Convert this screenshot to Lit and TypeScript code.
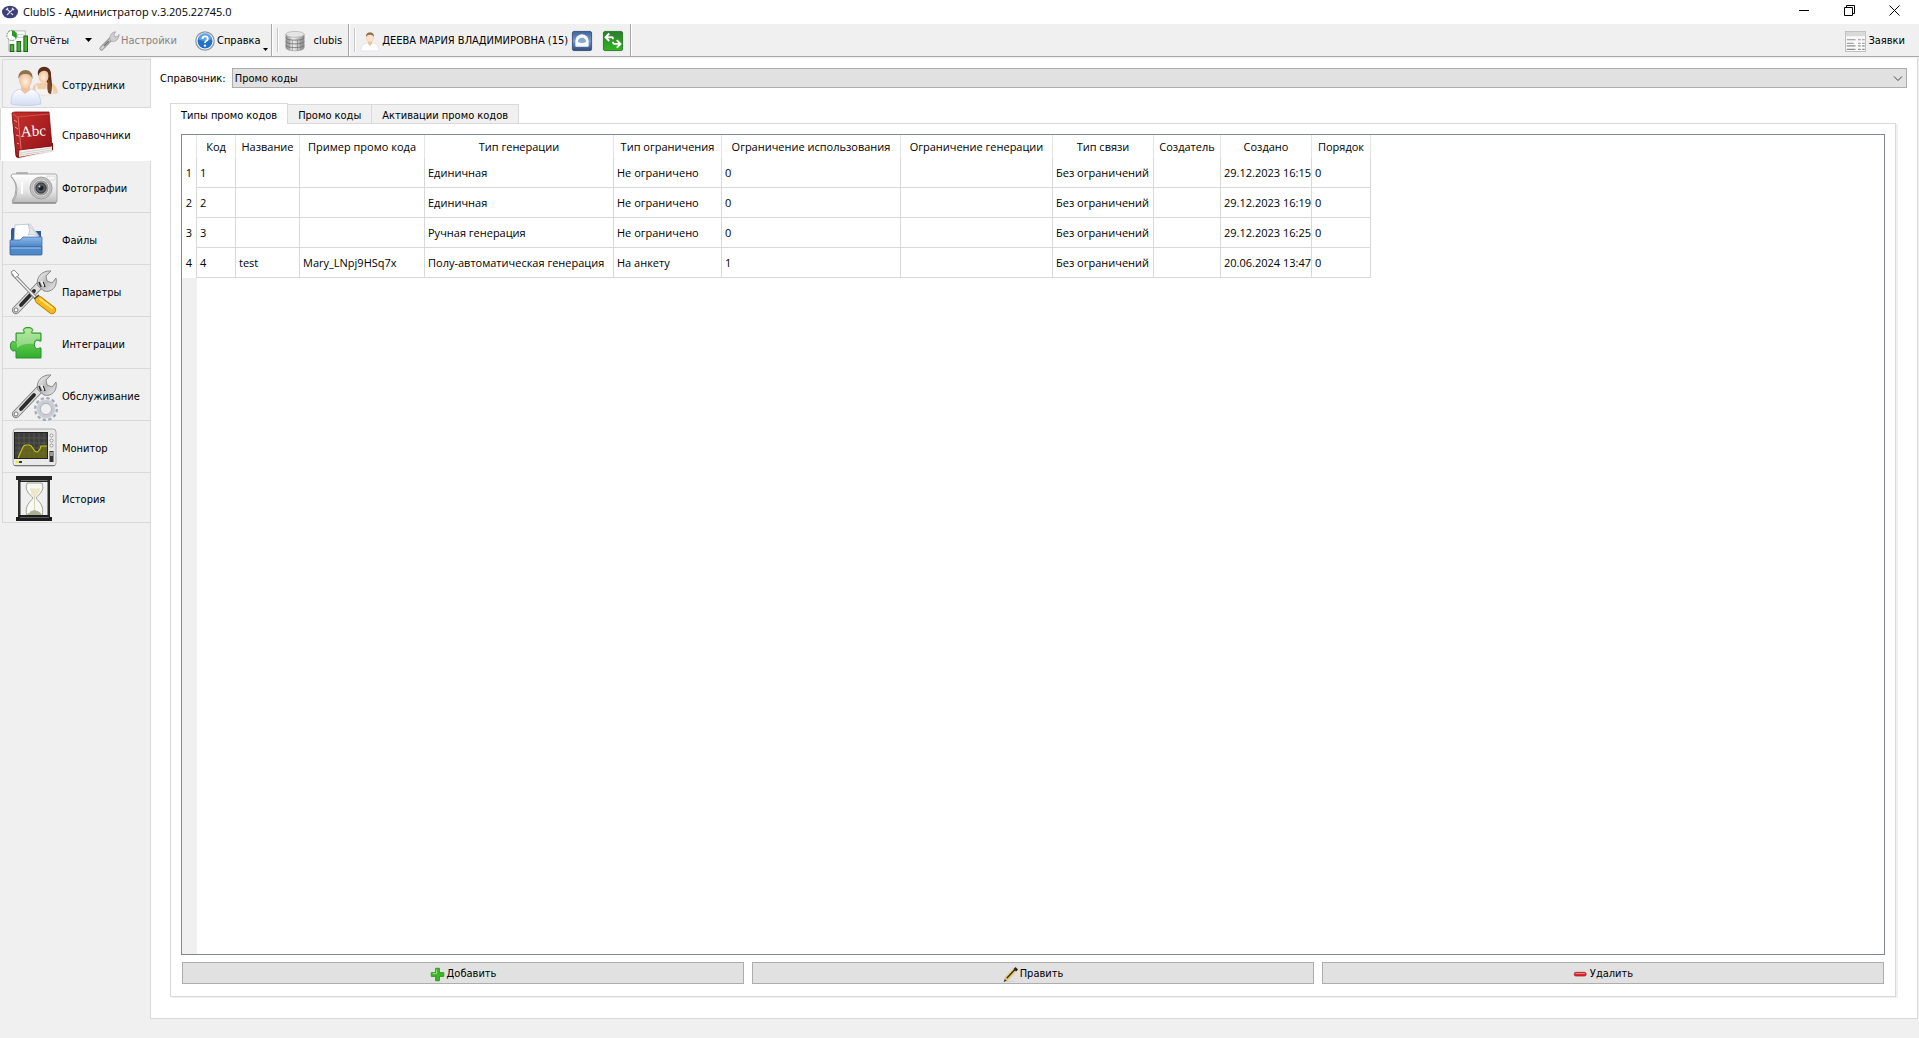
/**
 * ClubIS administrator window
 */
import { LitElement, html, svg, css, nothing } from 'lit'
import type { TemplateResult } from 'lit'
import { customElement, property, state } from 'lit/decorators.js'
import { classMap } from 'lit/directives/class-map.js'

const WRENCH = svg`
  <path d="M6 41 30 16" stroke="#7b7b7b" stroke-width="8" stroke-linecap="round"/>
  <path d="M6 41 30 16" stroke="#dedede" stroke-width="6.2" stroke-linecap="round"/>
  <path d="M11 36 24 22" stroke="#2c2c2c" stroke-width="3.8" stroke-linecap="round"/>
  <path d="M28 17C25 9 32 1 41 2L36 7 37 12 42 14 46 9C48 18 41 24 34 22Z" fill="url(#steel)" stroke="#8a8a8a"/>
  <path d="M29 13 31 18M33 13 35 18" stroke="#333" stroke-width="1.6"/>
  <path d="M31.500 12 33.500 17" stroke="#fff" stroke-width="1.2"/>
  <circle cx="6" cy="41" r="2" fill="#fff" stroke="#777"/>
`

const STEEL = svg`
  <linearGradient id="steel" x1="0" y1="0" x2="1" y2="1">
    <stop offset="0" stop-color="#fafafa"/><stop offset=".5" stop-color="#b9b9b9"/><stop offset="1" stop-color="#ededed"/>
  </linearGradient>
`

const ICONS: Record<string, TemplateResult> = {
  staff: svg`
    <defs>
      <radialGradient id="skin" cx=".5" cy=".6"><stop offset="0" stop-color="#ffeedd"/><stop offset="1" stop-color="#eec29b"/></radialGradient>
      <linearGradient id="shirt" x1="0" y1="0" x2="0" y2="1"><stop offset="0" stop-color="#fff"/><stop offset="1" stop-color="#d3dcf4"/></linearGradient>
    </defs>
    <g transform="translate(0 3)">
      <path d="M22 28C22 20 25 18 31 18L38 17C44 18 47 21 48 28 40 30 31 30 22 28Z" fill="#f3cda8"/>
      <path d="M26 18 28 24H36L38 17 41 18 44 28C38 31 30 31 25 28Z" fill="#f7f4ee" stroke="#ddd6c8" stroke-width=".5"/>
      <path d="M28 10C26-1 42-1 41 10L42 20 41 28C38 30 37 26 38 18Z" fill="#5a2f1c"/>
      <ellipse cx="33.5" cy="11" rx="5" ry="7" fill="url(#skin)"/>
      <path d="M28 10C28 0 39 0 39.500 9 36 4 31 5 28 10Z" fill="#5a2f1c"/>
      <path d="M38 14C42 17 42 25 41 29 37 29 37 20 38 14Z" fill="#7b472b"/>
    </g>
    <path d="M1 42C1 33 3 29 10 27L15 31 21 27C28 29 30 33 31 42 23 44 9 44 1 42Z" fill="url(#shirt)" stroke="#bfc9e2" stroke-width=".7"/>
    <path d="M11 23H20V28L15 32 11 28Z" fill="#edc39d"/>
    <ellipse cx="15.5" cy="18" rx="6.5" ry="8.5" fill="url(#skin)"/>
    <path d="M8.500 17C7 5 24 5 22.500 17 21 13 19 12 15 12 12 12 10 13 8.500 17Z" fill="#8f7152"/>
  `,
  book: svg`
    <defs>
      <linearGradient id="cover" x1="0" y1="0" x2="1" y2="1"><stop offset="0" stop-color="#c9302c"/><stop offset="1" stop-color="#8f1218"/></linearGradient>
    </defs>
    <path d="M8 45 43 38" stroke="#b8b8b8" stroke-width="3" opacity=".5"/>
    <path d="M2 3 8 45 9 39 43 31 43 38 8 46 6 45 2 3Z" fill="#7e1015"/>
    <path d="M9 38 42 34 42 39 9 45Z" fill="#f5f2ee"/>
    <path d="M9 41 42 36M9 43 42 38" stroke="#c7c0ba" stroke-width=".7"/>
    <path d="M2 1C3 0 5 0 7 0L39 0 42 34 9 38 8 45 6 44Z" fill="url(#cover)" stroke="#7c1015" stroke-width=".8"/>
    <path d="M8 5 11 37" stroke="#e0706a" stroke-width="1"/>
    <path d="M3 2 7 5 39 2" stroke="#e0706a" stroke-width=".6" fill="none"/>
    <path d="M4 8 7 10M5 15 8 17M6 23 9 24M7 31 9 32" stroke="#e8a09a" stroke-width="1"/>
    <text class="abc" x="11" y="24" transform="rotate(-3 24 22)">Abc</text>
  `,
  camera: svg`
    <defs>
      <linearGradient id="body" x1="0" y1="0" x2="0" y2="1"><stop offset="0" stop-color="#fff"/><stop offset=".6" stop-color="#e4e4e4"/><stop offset="1" stop-color="#b9b9b9"/></linearGradient>
      <radialGradient id="ring"><stop offset=".4" stop-color="#7d7d7d"/><stop offset="1" stop-color="#d0d0d0"/></radialGradient>
    </defs>
    <rect x="6" y="7" width="12" height="4" rx="1" fill="#b5b5b5"/>
    <path d="M3 9H45Q47 9 47 11V36Q47 38 44 38H5Q3 38 2 36 6 30 6 24 6 16 1 12 1 9 3 9Z" fill="url(#body)" stroke="#a5a5a5"/>
    <path d="M2 12Q7 18 7 24 7 32 3 37" fill="none" stroke="#aaa"/>
    <path d="M2 38H46" stroke="#777"/>
    <path d="M12 17V29" stroke="#fff" stroke-width="2"/>
    <rect x="37" y="11" width="8" height="4" fill="#f7f7f7" stroke="#c9c9c9" stroke-width=".6"/>
    <circle cx="31" cy="23" r="11" fill="url(#ring)" stroke="#8a8a8a" stroke-width=".7"/>
    <circle cx="31" cy="23" r="8" fill="#999" stroke="#ddd"/>
    <circle cx="31" cy="23" r="5" fill="#5a5f66" stroke="#333"/>
    <circle cx="31" cy="23" r="2.5" fill="#1b1e24"/>
    <circle cx="29.5" cy="21.5" r="1" fill="#cfd8e8"/>
  `,
  folder: svg`
    <defs>
      <linearGradient id="blue" x1="0" y1="0" x2="0" y2="1"><stop offset="0" stop-color="#8db9ea"/><stop offset="1" stop-color="#4a83c4"/></linearGradient>
    </defs>
    <path d="M1 13 2 11H10L12 14H31V30H1Z" fill="#2d5b95"/>
    <path d="M5 8 20 7 29 19V26H4Z" fill="#fff" stroke="#b8c0cc" stroke-width=".8"/>
    <path d="M18 7C20 12 20 15 18 18 22 17 26 18 29 20Z" fill="#e3e7ee" stroke="#b3bac6" stroke-width=".7"/>
    <path d="M0 23H10L13 20H32V30H0Z" fill="url(#blue)" stroke="#3d72b2" stroke-width=".8"/>
    <path d="M0 30H32V37Q32 38 31 38H1Q0 38 0 37Z" fill="#5089c9" stroke="#2f619e" stroke-width=".8"/>
    <path d="M1 31H31" stroke="#a8cbf2"/>
  `,
  tools: svg`
    <defs>${STEEL}</defs>
    ${WRENCH}
    <path d="M3 5 28 31" stroke="#8a8a8a" stroke-width="3.5" stroke-linecap="round"/>
    <path d="M3 5 28 31" stroke="#f2f2f2" stroke-width="1.5" stroke-linecap="round"/>
    <path d="M1 3 4 1 9 6 5 9Z" fill="#fff" stroke="#8a8a8a"/>
    <path d="M29 31 42 41" stroke="#b97c00" stroke-width="8" stroke-linecap="round"/>
    <path d="M29 31 42 41" stroke="#f7b918" stroke-width="6.5" stroke-linecap="round"/>
    <path d="M30 30 42 39" stroke="#ffe37c" stroke-width="2" stroke-linecap="round"/>
    <path d="M24 30 29 26" stroke="#444" stroke-width="1.5"/>
  `,
  puzzle: svg`
    <defs>
      <linearGradient id="green" x1="0" y1="0" x2="0" y2="1"><stop offset="0" stop-color="#8fe06d"/><stop offset="1" stop-color="#2fae2c"/></linearGradient>
    </defs>
    <path d="M6 12H14C15 11 12 9 14 7.500 16 6 20 6 22 7.500 24 9 21 11 22 12H31V20C30 21 27 18 25.500 20 24 22 24 25 25.500 27 27 29 30 26 31 27V37H6V30C5 29 3 31 1.500 29 0 27 0 23 1.500 21 3 19 5 22 6 21Z" fill="url(#green)" stroke="#2c8f33"/>
    <path d="M7 13H15C16 11 13 9 16 8H20C23 9 20 11 21 13H30V18C26 17 23 20 24 23 18 22 11 23 7 27V22L5 21C6 20 7 21 7 20Z" fill="#fff" opacity=".35"/>
  `,
  service: svg`
    <defs>${STEEL}</defs>
    ${WRENCH}
    <circle cx="36" cy="36" r="10" fill="none" stroke="#a4a9b4" stroke-width="4" stroke-dasharray="3 2.235"/>
    <circle cx="36" cy="36" r="7.5" fill="none" stroke="#c9ccd4" stroke-width="4"/>
    <circle cx="36" cy="36" r="5.5" fill="#efefef" stroke="#9b9fa9" stroke-width=".7"/>
    <circle cx="36" cy="36" r="9.5" fill="none" stroke="#e6e8ec" stroke-width=".8"/>
  `,
  monitor: svg`
    <rect x="3" y="4" width="43" height="37" rx="3" fill="#e9e9e9" stroke="#a8a8a8"/>
    <path d="M4 40.500H45" stroke="#777"/>
    <rect x="4.5" y="7.5" width="33" height="26" fill="#3d3d3b" stroke="#222"/>
    <path d="M9 8V33M14 8V33M19 8V33M24 8V33M29 8V33M34 8V33M5 13H37M5 18H37M5 23H37M5 28H37" stroke="#5e5e5a" stroke-width=".7"/>
    <path d="M8 33 13 22Q14 20 16 20H19Q21 20 22 22L24 25Q25 27 27 27 28 27 30 24L31 21H37V33H8Z" fill="#77760f" opacity=".65"/>
    <path d="M8 33 13 22Q14 20 16 20H19Q21 20 22 22L24 25Q25 27 27 27 28 27 30 24L31 21H37" fill="none" stroke="#c3c21c" stroke-width="1.2"/>
    <circle cx="41.5" cy="10.5" r="1.5" fill="#fff" stroke="#777" stroke-width=".7"/>
    <circle cx="41.5" cy="15.5" r="1.5" fill="#fff" stroke="#777" stroke-width=".7"/>
    <circle cx="41.5" cy="20.5" r="1.5" fill="#fff" stroke="#777" stroke-width=".7"/>
    <rect x="39.5" y="26" width="4" height="11" fill="#333"/>
    <rect x="40" y="27" width="3" height="4" fill="#999"/>
    <rect x="6" y="36" width="3" height="2" fill="#e6ee22"/>
    <rect x="9" y="36" width="3" height="2" fill="#333"/>
  `,
  hourglass: svg`
    <path d="M6 0H42V4H40L38 6H10L8 4H6Z" fill="#222"/>
    <path d="M11 4.500H38" stroke="#777"/>
    <rect x="8" y="4" width="2.5" height="37" fill="#2b2b2b"/>
    <rect x="37.5" y="4" width="2.5" height="37" fill="#2b2b2b"/>
    <path d="M17 7C14 15 20 18 23 22 20 26 14 30 17 40H32C35 30 29 26 26 22 29 18 35 15 32 7Z" fill="#f7f7f3" stroke="#a3a39a"/>
    <path d="M19 13C22 11 26 14 30 12 30 17 26 19 24.500 22 23 19 20 17 19 13Z" fill="#ece7c6"/>
    <path d="M24.500 20V34" stroke="#d9d5b5"/>
    <path d="M17 39C19 35 22 35 24.500 34 27 35 30 35 32 39Z" fill="#aeb096"/>
    <path d="M19 9Q18 14 21 17M19 37Q18 31 21 28" fill="none" stroke="#fff" stroke-width="1.5"/>
    <path d="M10 39H38L40 41H42V45H6V41H8Z" fill="#1c1c1c"/>
    <path d="M10 41.500H39" stroke="#777" stroke-width=".7"/>
  `
}

const SMALL_ICONS: Record<string, TemplateResult> = {
  app: svg`
    <ellipse cx="12" cy="12" rx="12" ry="9.5" fill="#3e4079"/>
    <path d="M8 8 16 16M16 8 8 16" stroke="#e8e8f4" stroke-width="1.8" stroke-linecap="round"/>
    <path d="M6 9 9 6M15 6 18 9" stroke="#e8e8f4" stroke-width="1.8"/>
  `,
  reports: svg`
    <path d="M3 1H21V23H3Z" fill="#fff" stroke="#b5b5b5"/>
    <path d="M12 5H19M12 8H19" stroke="#c5c5c5"/>
    <circle cx="6.5" cy="6" r="5.5" fill="#fff" stroke="#4c8a45" stroke-dasharray="2 1"/>
    <path d="M6.500 6V.5A5.500 5.500 0 0 1 11 9Z" fill="#279a25"/>
    <rect x="4.5" y="16" width="4" height="7.5" fill="#48b036" stroke="#165d12"/>
    <rect x="12" y="12.5" width="4" height="11" fill="#48b036" stroke="#165d12"/>
    <rect x="19.5" y="6.5" width="4" height="17" fill="#48b036" stroke="#165d12"/>
  `,
  settings: svg`
    <path d="M3 21 14 10" stroke="#8a8a8a" stroke-width="5" stroke-linecap="round"/>
    <path d="M3 21 14 10" stroke="#d2d2d2" stroke-width="3" stroke-linecap="round"/>
    <path d="M6 18 12 12" stroke="#777" stroke-width="2"/>
    <path d="M13 11C12 5 16 1 20 1L18 4 19 7 22 7 24 4C24 10 20 14 15 12Z" fill="#cfcfcf" stroke="#999" stroke-width=".8"/>
  `,
  help: svg`
    <circle cx="12" cy="12" r="11" fill="#fff" stroke="#8f959f" stroke-width="1.5"/>
    <circle cx="12" cy="12" r="9" fill="#2173c9"/>
    <path d="M4 10A8 8 0 0 1 20 10Q12 14 4 10Z" fill="#79b4ee" opacity=".7"/>
    <path d="M9 9.500Q9 6.500 12 6.500 15.300 6.500 15.300 9.300 15.300 11 13.500 12 12 12.800 12 14.500" fill="none" stroke="#fff" stroke-width="2.2"/>
    <circle cx="12" cy="17.5" r="1.4" fill="#fff"/>
  `,
  database: svg`
    <defs>
      <linearGradient id="metal"><stop offset="0" stop-color="#8a8a8a"/><stop offset=".4" stop-color="#f0f0f0"/><stop offset="1" stop-color="#8a8a8a"/></linearGradient>
    </defs>
    <path d="M1 4V20C1 25 23 25 23 20V4Z" fill="url(#metal)" stroke="#999" stroke-width=".7"/>
    <path d="M1 8C1 12 23 12 23 8M1 12.500C1 16.500 23 16.500 23 12.500M1 17C1 21 23 21 23 17" fill="none" stroke="#6f6f6f" stroke-width="1"/>
    <path d="M5 10V23M9 11V24M15 11V24M19 10V23" stroke="#777" stroke-width=".6"/>
    <ellipse cx="12" cy="4" rx="11" ry="3.5" fill="#e5e5e5" stroke="#aaa" stroke-width=".8"/>
  `,
  user: svg`
    <path d="M1 24C1 17 4 16 9 14L12 17 15 14C20 16 23 17 23 24Z" fill="#fff" stroke="#dce1ed"/>
    <path d="M9.500 12H14.500V15L12 18 9.500 15Z" fill="#ecc49c"/>
    <ellipse cx="12" cy="7.5" rx="4.3" ry="6" fill="#fbe3cb" stroke="#e5bd95" stroke-width=".5"/>
    <path d="M7.300 7C6 0 18 0 16.700 7 15 3.500 9 3.500 7.300 7Z" fill="#8a7455"/>
  `,
  lock: svg`
    <defs>
      <linearGradient id="navy" x1="0" y1="0" x2="0" y2="1"><stop offset="0" stop-color="#3f6398"/><stop offset=".5" stop-color="#7b9cc8"/><stop offset="1" stop-color="#2c4a7c"/></linearGradient>
    </defs>
    <rect x=".5" y=".5" width="23" height="23" rx="2" fill="url(#navy)" stroke="#2c4672"/>
    <path d="M4 18V12A8 8 0 0 1 20 12V18Q20 19 19 19H5Q4 19 4 18Z" fill="#f5f8fd"/>
    <path d="M7 13A5 5 0 0 1 17 13Q12 16 7 13Z" fill="#8ba7cc"/>
  `,
  swap: svg`
    <defs>
      <linearGradient id="leaf" x1="0" y1="0" x2="0" y2="1"><stop offset="0" stop-color="#2b7b30"/><stop offset="1" stop-color="#31b61f"/></linearGradient>
    </defs>
    <rect x=".5" y=".5" width="23" height="23" rx="2" fill="url(#leaf)" stroke="#1e6b22"/>
    <path d="M7.500 3 3 7.500 7.500 12M3 7.500H10.500Q12 7.500 12 10" fill="none" stroke="#fff" stroke-width="2.2"/>
    <path d="M16.500 11 21 15.500 16.500 20M21 15.500H13.500Q12 15.500 12 13" fill="none" stroke="#fff" stroke-width="2.2"/>
  `,
  requests: svg`
    <rect x=".5" y=".5" width="23" height="23" fill="#fafafa" stroke="#b8b8b8"/>
    <rect x="1" y="1" width="22" height="5" fill="#d9d9d9"/>
    <path d="M2 10H12M2 14H10M2 17H12M2 21H12" stroke="#8f8f8f" stroke-width="1.2"/>
    <path d="M15 10H23M15 14H23M15 17H23M15 21H23" stroke="#8f8f8f" stroke-width="1.2" stroke-dasharray="3 1.5"/>
  `,
  plus: svg`
    <path d="M9 2H15V9H22V15H15V22H9V15H2V9H9Z" fill="#3fb52a" stroke="#2a9a1e" stroke-width="1.5" stroke-linejoin="round"/>
    <path d="M10.500 4V10.500H4" fill="none" stroke="#9be583" stroke-width="1.5"/>
  `,
  pencil: svg`
    <path d="M6 23H18" stroke="#cfcfcf" stroke-width="1.5"/>
    <path d="M2 23 4 16 18 2 23 4 9 20Z" fill="#efce6c" stroke="#d9bd68"/>
    <path d="M6 18 19 4" stroke="#2f2a1c" stroke-width="2.2"/>
    <path d="M17 3 20 0 24 4 21 7Z" fill="#222"/>
    <path d="M1 24 3 19 6 22Z" fill="#333"/>
  `,
  minus: svg`
    <rect x="2" y="8.5" width="19" height="6" rx="2.5" fill="#d8262b" stroke="#a5161a"/>
    <path d="M4 10.500H19" stroke="#f2898b" stroke-width="1.5"/>
  `
}

@customElement('club-icon')
export class ClubIcon extends LitElement {
  static styles = css`
    :host {
      display: block;
      flex: none;
    }

    svg {
      display: block;
      overflow: visible;
    }

    .abc {
      font-family: 'Liberation Serif', serif;
      font-size: 15px;
      fill: #fff;
    }
  `

  @property({ type: String }) name = ''
  @property({ type: Number }) size = 20

  render() {
    const large = this.name in ICONS
    const box = large ? 48 : 24
    return html`
      <svg width=${this.size} height=${this.size} viewBox="0 0 ${box} ${box}" fill="none" aria-hidden="true">
        ${large ? ICONS[this.name] : SMALL_ICONS[this.name]}
      </svg>
    `
  }
}

const SECTIONS = [
  { icon: 'staff', label: 'Сотрудники' },
  { icon: 'book', label: 'Справочники' },
  { icon: 'camera', label: 'Фотографии' },
  { icon: 'folder', label: 'Файлы' },
  { icon: 'tools', label: 'Параметры' },
  { icon: 'puzzle', label: 'Интеграции' },
  { icon: 'service', label: 'Обслуживание' },
  { icon: 'monitor', label: 'Монитор' },
  { icon: 'hourglass', label: 'История' }
]

const TABS = ['Типы промо кодов', 'Промо коды', 'Активации промо кодов']

const COLUMNS = [
  { label: 'Код', width: 39 },
  { label: 'Название', width: 64 },
  { label: 'Пример промо кода', width: 125 },
  { label: 'Тип генерации', width: 189 },
  { label: 'Тип ограничения', width: 108 },
  { label: 'Ограничение использования', width: 179 },
  { label: 'Ограничение генерации', width: 152 },
  { label: 'Тип связи', width: 101 },
  { label: 'Создатель', width: 67 },
  { label: 'Создано', width: 91 },
  { label: 'Порядок', width: 59 }
]

const ROWS = [
  ['1', '', '', 'Единичная', 'Не ограничено', '0', '', 'Без ограничений', '', '29.12.2023 16:15', '0'],
  ['2', '', '', 'Единичная', 'Не ограничено', '0', '', 'Без ограничений', '', '29.12.2023 16:19', '0'],
  ['3', '', '', 'Ручная генерация', 'Не ограничено', '0', '', 'Без ограничений', '', '29.12.2023 16:25', '0'],
  ['4', 'test', 'Mary_LNpj9HSq7x', 'Полу-автоматическая генерация', 'На анкету', '1', '', 'Без ограничений', '', '20.06.2024 13:47', '0']
]

const ACTIONS = [
  { icon: 'plus', label: 'Добавить' },
  { icon: 'pencil', label: 'Править' },
  { icon: 'minus', label: 'Удалить' }
]

@customElement('app-root')
export class AppRoot extends LitElement {
  static styles = css`
    :host {
      display: flex;
      flex-direction: column;
      min-height: 100vh;
      box-sizing: border-box;
      background: #f0f0f0;
      color: #000;
      font-family: 'DejaVu Sans Condensed', 'DejaVu Sans', sans-serif;
      font-size: 11px;
      line-height: 14px;
    }

    * {
      box-sizing: border-box;
    }

    button,
    select {
      margin: 0;
      padding: 0;
      border: 0;
      border-radius: 0;
      background: none;
      color: inherit;
      font: inherit;
    }

    .titlebar {
      display: flex;
      align-items: center;
      height: 24px;
      padding: 0 2px;
      background: #fff;
    }

    .title {
      flex: 1;
      margin: 0;
      padding-left: 5px;
      font-family: 'Open Sans', 'Noto Sans', sans-serif;
      font-size: 11px;
      font-weight: 400;
    }

    .window-button {
      display: grid;
      place-items: center;
      width: 45px;
      height: 24px;
      padding-bottom: 3px;
    }

    .toolbar {
      display: flex;
      height: 33px;
      border-bottom: 1px solid #a8a8a8;
    }

    .group {
      display: flex;
      align-items: center;
      border-right: 1px solid #a8a8a8;
      box-shadow: 1px 0 #fff;
    }

    .group.main { padding-left: 6px; padding-right: 3px; }
    .group.base { padding-right: 6px; }
    .group.account { padding-right: 7px; }

    .handle {
      width: 2px;
      height: 24px;
      margin: 0 4px 0 5px;
      border-left: 1px solid #c8c8c8;
      background: #fff;
    }

    .tool {
      display: flex;
      align-items: center;
      gap: 2px;
      height: 32px;
      padding-top: 2px;
      white-space: nowrap;
    }

    .tool:disabled { color: #838383; }
    .tool.wide { gap: 9px; margin-left: 2px; }
    .tool.person { gap: 2px; }
    .tool.square { margin-left: 11px; }
    .tool.person + .square { margin-left: 4px; }
    .tool.settings { margin-left: 1px; }
    .tool.help { margin-left: 18px; }
    .tool.right { margin-left: auto; margin-right: 14px; }

    .arrow {
      width: 20px;
      display: grid;
      place-items: center;
      height: 32px;
      margin-left: 9px;
    }

    .corner {
      align-self: flex-end;
      margin-bottom: 5px;
    }

    .main-area {
      flex: 1;
      display: flex;
      padding: 1px 1px 19px 0;
    }

    .sidebar {
      display: flex;
      flex-direction: column;
      width: 150px;
      padding-top: 1px;
    }

    .section {
      display: flex;
      align-items: center;
      gap: 4px;
      height: 52px;
      padding: 4px 0 0 7px;
      margin-left: 2px;
      border: 1px solid #d9d9d9;
      border-width: 0 0 1px 1px;
      text-align: left;
    }

    .section:first-child {
      height: 49px;
      border-top-width: 1px;
    }

    .section:last-child {
      height: 50px;
    }

    .section.active {
      position: relative;
      height: 53px;
      margin: 0 -1px 0 0;
      padding-left: 9px;
      background: #fff;
      border-bottom-color: #fff;
    }

    .workspace {
      flex: 1;
      display: flex;
      flex-direction: column;
      min-width: 0;
      padding: 10px 10px 21px 9px;
      background: #fff;
      border: 1px solid #d9d9d9;
      border-top: 0;
    }

    .chooser {
      display: flex;
      align-items: center;
      gap: 6px;
      height: 20px;
      margin-bottom: 14px;
    }

    .chooser label {
      padding-top: 2px;
    }

    .combo {
      position: relative;
      flex: 1;
      display: flex;
    }

    .combo select {
      flex: 1;
      height: 20px;
      padding: 2px 24px 0 2px;
      appearance: none;
      background: #e1e1e1;
      border: 1px solid #adadad;
    }

    .combo svg {
      position: absolute;
      right: 4px;
      top: 8px;
      pointer-events: none;
    }

    .tabs {
      display: flex;
      align-items: flex-end;
      height: 21px;
      margin-left: 10px;
    }

    .tab {
      position: relative;
      height: 19px;
      padding: 3px 10px 0;
      background: #f0f0f0;
      border: 1px solid #d9d9d9;
      border-width: 1px 1px 0 0;
      white-space: nowrap;
    }

    .tab.active {
      height: 21px;
      background: #fff;
      border-left-width: 1px;
      margin-bottom: -1px;
      z-index: 1;
    }

    .panel {
      flex: 1;
      display: flex;
      flex-direction: column;
      margin: 0 11px 0 10px;
      padding: 10px 10px 12px;
      border: 1px solid #d9d9d9;
      box-shadow: 2px 1px #f0f0f0;
    }

    .grid {
      flex: 1;
      display: flex;
      flex-direction: column;
      border: 1px solid #828790;
      margin-bottom: 7px;
    }

    .filler {
      flex: 1;
      width: 15px;
      background: #f0f0f0;
    }

    table {
      width: min-content;
      table-layout: fixed;
      border-collapse: separate;
      border-spacing: 0;
      font-family: 'Open Sans', 'Noto Sans', sans-serif;
      font-size: 11px;
    }

    th,
    td {
      padding: 0;
      border-right: 1px solid #d9d9d9;
      font-weight: 400;
      white-space: nowrap;
    }

    th {
      text-align: center;
    }

    thead th {
      height: 23px;
      border-right-color: #e5e5e5;
    }

    td {
      height: 30px;
      padding-left: 3px;
      border-bottom: 1px solid #d9d9d9;
    }

    .actions {
      display: grid;
      grid-template-columns: repeat(3, 1fr);
      gap: 8px;
      padding: 0 1px;
    }

    .action {
      display: flex;
      align-items: center;
      justify-content: center;
      gap: 2px;
      height: 22px;
      padding-top: 2px;
      background: #e1e1e1;
      border: 1px solid #adadad;
    }
  `

  @state() private section = 1
  @state() private tab = 0

  private renderWindowButton(label: string, path: string) {
    return html`
      <button class="window-button" aria-label=${label}>
        <svg width="11" height="11" viewBox="0 0 11 11" fill="none" stroke="#000"><path d=${path} /></svg>
      </button>
    `
  }

  private renderToolbar() {
    return html`
      <div class="toolbar">
        <div class="group main">
          <button class="tool"><club-icon name="reports" size="22"></club-icon>Отчёты</button>
          <button class="arrow" aria-label="Список отчётов">
            <svg width="7" height="4" viewBox="0 0 7 4"><path d="M0 0H7L3.500 4Z" /></svg>
          </button>
          <button class="tool settings" disabled><club-icon name="settings" size="20"></club-icon>Настройки</button>
          <button class="tool help">
            <club-icon name="help" size="20"></club-icon>Справка
            <svg class="corner" width="5" height="3" viewBox="0 0 5 3"><path d="M0 0H5L2.500 3Z" /></svg>
          </button>
        </div>
        <div class="group base">
          <span class="handle"></span>
          <button class="tool wide"><club-icon name="database" size="20"></club-icon>clubis</button>
        </div>
        <div class="group account">
          <span class="handle"></span>
          <button class="tool person"><club-icon name="user" size="20"></club-icon>ДЕЕВА МАРИЯ ВЛАДИМИРОВНА (15)</button>
          <button class="tool square" aria-label="Заблокировать"><club-icon name="lock" size="20"></club-icon></button>
          <button class="tool square" aria-label="Сменить пользователя"><club-icon name="swap" size="20"></club-icon></button>
        </div>
        <button class="tool right"><club-icon name="requests" size="21"></club-icon>Заявки</button>
      </div>
    `
  }

  private renderTable() {
    return html`
      <div class="grid">
        <table>
          <colgroup>
            <col style="width: 15px" />
            ${COLUMNS.map(c => html`<col style="width: ${c.width}px" />`)}
          </colgroup>
          <thead>
            <tr>
              <th></th>
              ${COLUMNS.map(c => html`<th scope="col">${c.label}</th>`)}
            </tr>
          </thead>
          <tbody>
            ${ROWS.map((row, i) => html`
              <tr>
                <th scope="row">${i + 1}</th>
                ${row.map(cell => html`<td>${cell || nothing}</td>`)}
              </tr>
            `)}
          </tbody>
        </table>
        <div class="filler"></div>
      </div>
    `
  }

  render() {
    return html`
      <header class="titlebar">
        <club-icon name="app" size="16"></club-icon>
        <h1 class="title">ClubIS - Администратор v.3.205.22745.0</h1>
        ${this.renderWindowButton('Свернуть', 'M0 5.500H10')}
        ${this.renderWindowButton('Восстановить', 'M.5 2.500H8.500V10.500H.5ZM2.500 2.500V.5H10.500V8.500H8.500')}
        ${this.renderWindowButton('Закрыть', 'M.5 .5 10.500 10.500M10.500 .5 .5 10.500')}
      </header>
      ${this.renderToolbar()}
      <div class="main-area">
        <nav class="sidebar">
          ${SECTIONS.map((s, i) => html`
            <button
              class=${classMap({ section: true, active: i === this.section })}
              @click=${() => this.section = i}
            ><club-icon name=${s.icon} size="48"></club-icon>${s.label}</button>
          `)}
        </nav>
        <main class="workspace">
          <div class="chooser">
            <label for="directory">Справочник:</label>
            <div class="combo">
              <select id="directory"><option>Промо коды</option></select>
              <svg width="10" height="6" viewBox="0 0 10 6" fill="none" stroke="#444"><path d="M1 .5 5 4.500 9 .5" /></svg>
            </div>
          </div>
          <div class="tabs" role="tablist">
            ${TABS.map((t, i) => html`
              <button
                role="tab"
                aria-selected=${i === this.tab}
                class=${classMap({ tab: true, active: i === this.tab })}
                @click=${() => this.tab = i}
              >${t}</button>
            `)}
          </div>
          <section class="panel">
            ${this.renderTable()}
            <div class="actions">
              ${ACTIONS.map(a => html`
                <button class="action"><club-icon name=${a.icon} size="15"></club-icon>${a.label}</button>
              `)}
            </div>
          </section>
        </main>
      </div>
    `
  }
}

declare global {
  interface HTMLElementTagNameMap {
    'app-root': AppRoot
    'club-icon': ClubIcon
  }
}
